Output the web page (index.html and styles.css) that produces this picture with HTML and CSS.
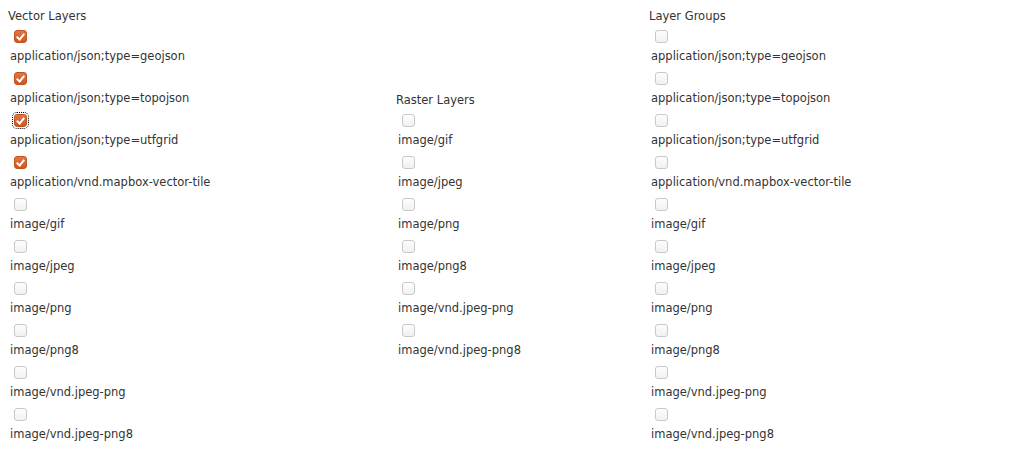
FILE: index.html
```html
<!DOCTYPE html>
<html><head><meta charset="utf-8"><link rel="stylesheet" href="styles.css"></head>
<body>
<div class="cols">
  <div class="col col-vector">
    <div class="title">Vector Layers</div>
    <div class="item"><div class="cb-row"><span class="cb on"></span></div><div class="label">application/json;type=geojson</div></div>
    <div class="item"><div class="cb-row"><span class="cb on"></span></div><div class="label">application/json;type=topojson</div></div>
    <div class="item"><div class="cb-row"><span class="cb on focus"></span></div><div class="label">application/json;type=utfgrid</div></div>
    <div class="item"><div class="cb-row"><span class="cb on"></span></div><div class="label">application/vnd.mapbox-vector-tile</div></div>
    <div class="item"><div class="cb-row"><span class="cb"></span></div><div class="label">image/gif</div></div>
    <div class="item"><div class="cb-row"><span class="cb"></span></div><div class="label">image/jpeg</div></div>
    <div class="item"><div class="cb-row"><span class="cb"></span></div><div class="label">image/png</div></div>
    <div class="item"><div class="cb-row"><span class="cb"></span></div><div class="label">image/png8</div></div>
    <div class="item"><div class="cb-row"><span class="cb"></span></div><div class="label">image/vnd.jpeg-png</div></div>
    <div class="item"><div class="cb-row"><span class="cb"></span></div><div class="label">image/vnd.jpeg-png8</div></div>
  </div>
  <div class="col col-raster">
    <div class="title">Raster Layers</div>
    <div class="item"><div class="cb-row"><span class="cb"></span></div><div class="label">image/gif</div></div>
    <div class="item"><div class="cb-row"><span class="cb"></span></div><div class="label">image/jpeg</div></div>
    <div class="item"><div class="cb-row"><span class="cb"></span></div><div class="label">image/png</div></div>
    <div class="item"><div class="cb-row"><span class="cb"></span></div><div class="label">image/png8</div></div>
    <div class="item"><div class="cb-row"><span class="cb"></span></div><div class="label">image/vnd.jpeg-png</div></div>
    <div class="item"><div class="cb-row"><span class="cb"></span></div><div class="label">image/vnd.jpeg-png8</div></div>
  </div>
  <div class="col col-groups">
    <div class="title">Layer Groups</div>
    <div class="item"><div class="cb-row"><span class="cb"></span></div><div class="label">application/json;type=geojson</div></div>
    <div class="item"><div class="cb-row"><span class="cb"></span></div><div class="label">application/json;type=topojson</div></div>
    <div class="item"><div class="cb-row"><span class="cb"></span></div><div class="label">application/json;type=utfgrid</div></div>
    <div class="item"><div class="cb-row"><span class="cb"></span></div><div class="label">application/vnd.mapbox-vector-tile</div></div>
    <div class="item"><div class="cb-row"><span class="cb"></span></div><div class="label">image/gif</div></div>
    <div class="item"><div class="cb-row"><span class="cb"></span></div><div class="label">image/jpeg</div></div>
    <div class="item"><div class="cb-row"><span class="cb"></span></div><div class="label">image/png</div></div>
    <div class="item"><div class="cb-row"><span class="cb"></span></div><div class="label">image/png8</div></div>
    <div class="item"><div class="cb-row"><span class="cb"></span></div><div class="label">image/vnd.jpeg-png</div></div>
    <div class="item"><div class="cb-row"><span class="cb"></span></div><div class="label">image/vnd.jpeg-png8</div></div>
  </div>
</div>
</body></html>
```
FILE: styles.css
```css
html, body { margin: 0; padding: 0; background: #fff; }
body {
  padding: 8px;
  font-family: "DejaVu Sans", Verdana, sans-serif;
  font-size: 11.5px;
  color: #333;
}
.cols {
  display: grid;
  grid-template-columns: 388px 253px auto;
  align-items: center;
}
.title {
  height: 16px;
  line-height: 16px;
  font-size: 11.5px;
}
.item { display: block; }
.cb-row {
  height: 20px;
  display: flex;
  align-items: flex-end;
  padding-left: 6px;
}
.cb {
  width: 11px;
  height: 11px;
  border: 1px solid #c9c9c9;
  border-radius: 3px;
  background: linear-gradient(#fdfdfd, #f1f1f1);
  position: relative;
  display: block;
  margin-bottom: 1px;
}
.cb.on {
  border-color: #c0541f;
  background: linear-gradient(#e27644, #cc5526);
}
.cb.on::after {
  content: "";
  position: absolute;
  left: 3px;
  top: 1px;
  width: 3px;
  height: 6px;
  border: solid #fff;
  border-width: 0 2px 2px 0;
  transform: rotate(40deg);
}
.cb.focus { outline: 1px dotted #000; outline-offset: 1px; }
.label {
  height: 22px;
  padding-top: 3px;
  box-sizing: border-box;
  line-height: 18px;
  padding-left: 2px;
  white-space: nowrap;
}
```
